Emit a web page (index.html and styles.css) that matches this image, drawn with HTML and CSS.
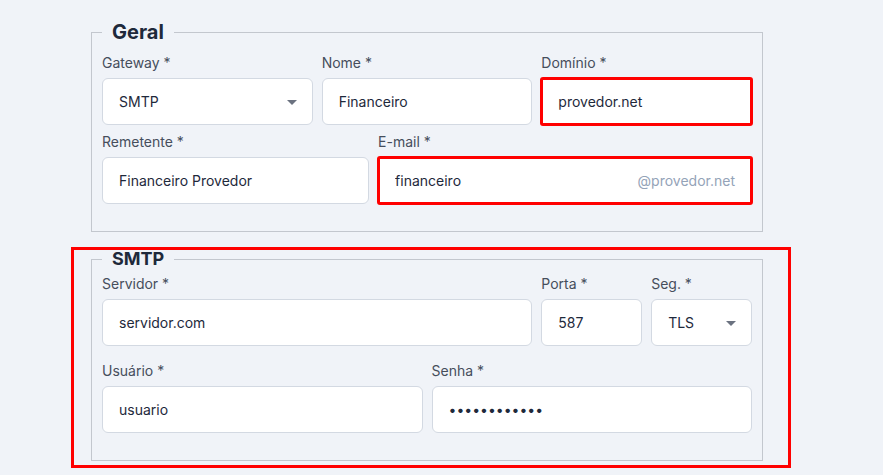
FILE: index.html
```html
<!DOCTYPE html>
<html lang="pt-BR">
<head>
    <meta charset="UTF-8">
    <meta name="viewport" content="width=device-width, initial-scale=1.0">
    <title>Gateway de e-mail</title>
    <link rel="stylesheet" href="styles.css">
</head>
<body>
    <form class="page">
        <fieldset class="group group-geral">
            <legend>Geral</legend>
            <div class="row cols-3">
                <div class="field">
                    <label>Gateway *</label>
                    <div class="select">
                        <select class="input">
                            <option>SMTP</option>
                        </select>
                    </div>
                </div>
                <div class="field">
                    <label>Nome *</label>
                    <input type="text" class="input" value="Financeiro">
                </div>
                <div class="field">
                    <label>Domínio *</label>
                    <input type="text" class="input flagged" value="provedor.net">
                </div>
            </div>
            <div class="row cols-5-7">
                <div class="field">
                    <label>Remetente *</label>
                    <input type="text" class="input" value="Financeiro Provedor">
                </div>
                <div class="field">
                    <label>E-mail *</label>
                    <div class="input input-group flagged">
                        <input type="text" value="financeiro">
                        <span class="suffix">@provedor.net</span>
                    </div>
                </div>
            </div>
        </fieldset>

        <!-- SMTP section -->
        <div class="highlight">
            <fieldset class="group group-smtp">
                <legend>SMTP</legend>
                <div class="row cols-3">
                    <div class="field span-2">
                        <label>Servidor *</label>
                        <input type="text" class="input" value="servidor.com">
                    </div>
                    <div class="row cols-2 inner">
                        <div class="field">
                            <label>Porta *</label>
                            <input type="text" class="input" value="587">
                        </div>
                        <div class="field">
                            <label>Seg. *</label>
                            <div class="select">
                                <select class="input">
                                    <option>TLS</option>
                                </select>
                            </div>
                        </div>
                    </div>
                </div>
                <div class="row cols-2 spaced">
                    <div class="field">
                        <label>Usuário *</label>
                        <input type="text" class="input" value="usuario">
                    </div>
                    <div class="field">
                        <label>Senha *</label>
                        <input type="password" class="input password" value="senhasecreta">
                    </div>
                </div>
            </fieldset>
        </div>
    </form>
</body>
</html>
```

FILE: styles.css
```css
body {
    margin: 0;
    background-color: #f0f3f8;
    font-family: Inter, "Noto Sans", sans-serif;
    color: #1e293b;
}

.page {
    width: 672px;
    margin-left: 91px;
    padding-top: 22px;
}

.group {
    margin: 0;
    border: 1px solid #c3c7ce;
    padding: 11px 10px 27px 10px;
    min-width: 0;
}

.group legend {
    padding: 0 10px;
    font-weight: 700;
    color: #1e293b;
}

.group-geral legend {
    font-size: 20px;
    line-height: 20px;
}

.group-smtp {
    padding-top: 6px;
}

.group-smtp legend {
    font-size: 18px;
    line-height: 18px;
}

/* red box round the SMTP block */
.highlight {
    margin: 15px -28px 0 -20px;
    border: 3px solid #ff0000;
    padding: 0 25px 4px 17px;
}

.row {
    display: grid;
    gap: 9px;
}

.row + .row {
    margin-top: 7px;
}

.row.spaced {
    margin-top: 15px;
}

.cols-3 {
    grid-template-columns: 1fr 1fr 1fr;
}

.cols-5-7 {
    grid-template-columns: 5fr 7fr;
}

.cols-2 {
    grid-template-columns: 1fr 1fr;
}

.span-2 {
    grid-column: span 2;
}

.field {
    display: flex;
    flex-direction: column;
    min-width: 0;
}

.field label {
    font-size: 14px;
    line-height: 20px;
    color: #464e5c;
    margin-bottom: 5px;
}

.input {
    box-sizing: border-box;
    width: 100%;
    height: 47px;
    margin: 0;
    padding: 0 16px;
    background: #ffffff;
    border: 1px solid #d3d9e2;
    border-radius: 6px;
    font-family: inherit;
    font-size: 14px;
    color: #1e293b;
    outline: none;
}

.flagged {
    outline: 3px solid #ff0000;
    outline-offset: -2px;
    border-radius: 2px;
}

.input-group {
    display: flex;
    align-items: center;
}

.input-group input {
    flex: 1;
    min-width: 0;
    border: none;
    padding: 0;
    font-family: inherit;
    font-size: 14px;
    color: #1e293b;
    background: transparent;
    outline: none;
}

.suffix {
    color: #94a3b8;
    font-size: 14px;
}

.select {
    position: relative;
}

.select select {
    appearance: none;
    -webkit-appearance: none;
}

.select::after {
    content: '';
    position: absolute;
    right: 16px;
    top: 22px;
    border-left: 5px solid transparent;
    border-right: 5px solid transparent;
    border-top: 5px solid #6b7280;
    pointer-events: none;
}

.password {
    letter-spacing: 0;
}
```
